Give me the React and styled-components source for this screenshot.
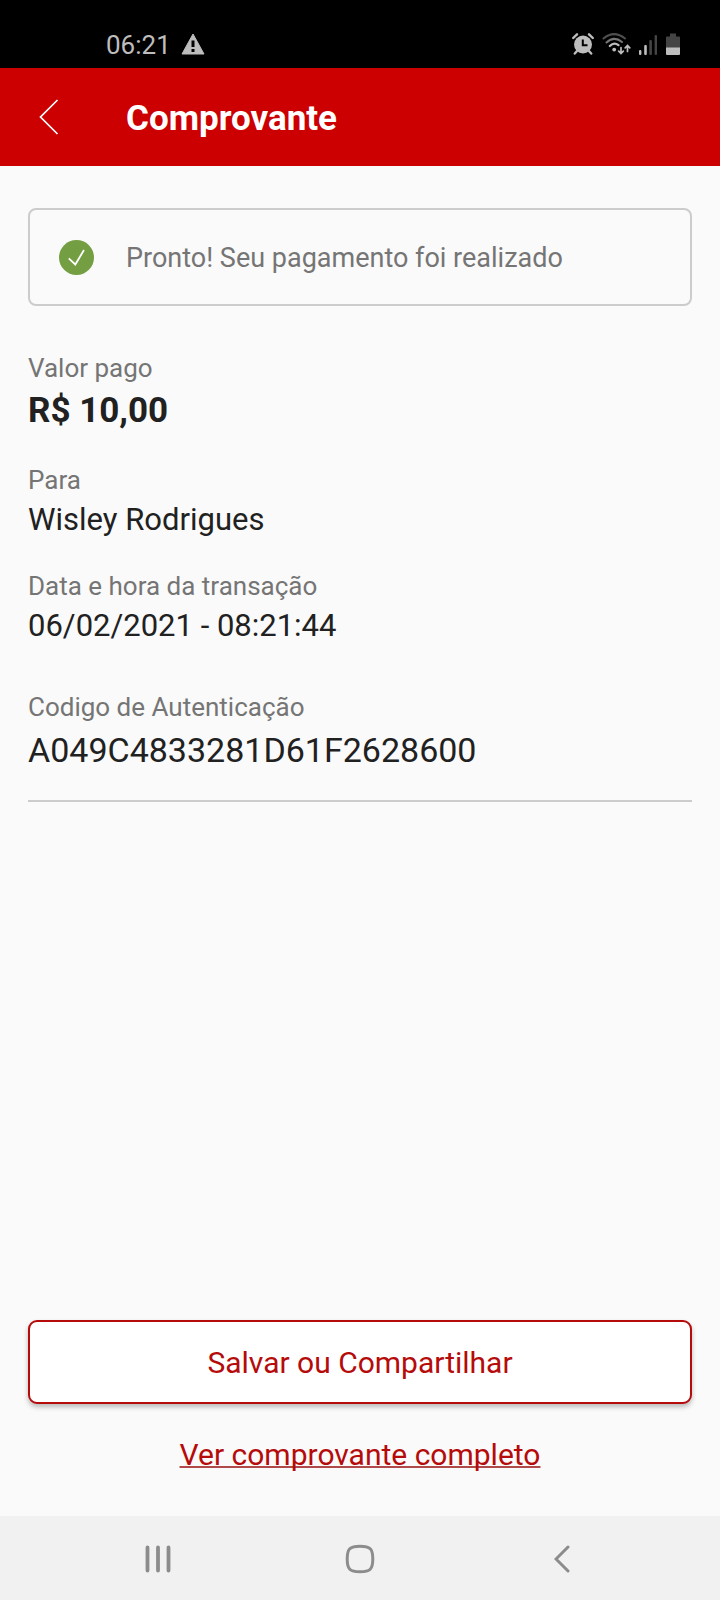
import React from "react";
import styled, { createGlobalStyle } from "styled-components";

const GlobalStyle = createGlobalStyle`
  *, *::before, *::after { box-sizing: border-box; }
  body { margin: 0; background: #fafafa; }
  button { font: inherit; cursor: pointer; }
  svg { display: block; flex: none; }
`;

const Screen = styled.div`
  display: flex;
  flex-direction: column;
  min-height: 100vh;
  background: #fafafa;
  color: #212121;
  font-family: Roboto, "Liberation Sans", sans-serif;
`;

const StatusBar = styled.div`
  display: flex;
  justify-content: space-between;
  height: 68px;
  padding: 22px 40px 0 106px;
  background: #000;
  color: #bdbdbd;
`;

const StatusGroup = styled.div`
  display: flex;
  align-items: center;
  gap: ${({ $gap }) => $gap}px;
  height: 44px;
`;

const Clock = styled.time`
  padding-top: 2px;
  font-size: 26px;
  line-height: 44px;
`;

const Header = styled.header`
  display: flex;
  align-items: center;
  height: 98px;
  padding: 0 29px;
  background: #c00;
  color: #fff;
`;

const IconButton = styled.button`
  display: flex;
  align-items: center;
  justify-content: center;
  width: 40px;
  height: 60px;
  padding: 0;
  border: 0;
  background: none;
  color: inherit;
`;

const Title = styled.h1`
  margin: 0 0 0 57px;
  padding-top: 3px;
  font-size: 35px;
  line-height: 50px;
  font-weight: 700;
`;

const Content = styled.main`
  display: flex;
  flex: 1;
  flex-direction: column;
  padding: 42px 28px 39px;
`;

const Notice = styled.div`
  display: flex;
  align-items: center;
  gap: 32px;
  min-height: 98px;
  padding: 0 29px;
  border: 2px solid #ccc;
  border-radius: 8px;
  color: #757575;
  font-size: 27px;
  line-height: 36px;
`;

const NoticeText = styled.span`
  padding-top: 2px;
`;

const Details = styled.dl`
  display: flex;
  flex-direction: column;
  gap: 26px;
  margin: 44px 0 0;
  padding-bottom: 25px;
  border-bottom: 2px solid #ccc;
`;

const Field = styled.div`
  padding-top: ${({ $spaced }) => ($spaced ? 15 : 0)}px;
`;

const Label = styled.dt`
  color: #757575;
  font-size: 26px;
  line-height: 36px;
`;

const valueSizes = {
  medium: { font: 31, line: 44 },
  code: { font: 34, line: 50 },
  large: { font: 35, line: 50 },
};

const Value = styled.dd`
  margin: 0;
  font-size: ${({ $size }) => valueSizes[$size].font}px;
  line-height: ${({ $size }) => valueSizes[$size].line}px;
  font-weight: ${({ $bold }) => ($bold ? 700 : 400)};
`;

const Actions = styled.div`
  display: flex;
  flex-direction: column;
  align-items: center;
  gap: 29px;
  margin-top: auto;
`;

const PrimaryButton = styled.button`
  width: 100%;
  height: 84px;
  padding: 2px 0 0;
  border: 2px solid #b50b0b;
  border-radius: 9px;
  background: #fff;
  box-shadow: 0 3px 5px rgba(0, 0, 0, 0.26);
  color: #b50b0b;
  font-size: 30px;
  line-height: 44px;
`;

const ReceiptLink = styled.a`
  color: #b50b0b;
  font-size: 30px;
  line-height: 44px;
  text-decoration: underline;
  text-decoration-thickness: 2px;
  text-decoration-skip-ink: none;
  text-decoration-color: #b04a4a;
`;

const NavBar = styled.nav`
  display: grid;
  grid-template-columns: repeat(3, 1fr);
  width: 84%;
  height: 84px;
  margin: 0 auto;
`;

const NavBackground = styled.div`
  background: #f1f1f1;
`;

const NavButton = styled(IconButton)`
  width: 100%;
  height: 84px;
  padding: 2px 0 0;
  color: #8c8c8c;
`;

const WarningIcon = () => (
  <svg width="24" height="22" viewBox="0 0 24 22" aria-hidden="true">
    <path d="M12 1 L23 21 H1 Z" fill="#bdbdbd" stroke="#bdbdbd" strokeLinejoin="round" />
    <path d="M10.5 7.5h3v6.5h-3zM10.5 16h3v3h-3z" fill="#000" />
  </svg>
);

const AlarmIcon = () => (
  <svg width="22" height="22" viewBox="0 0 22 22" fill="none" aria-hidden="true">
    <circle cx="11" cy="11.5" r="9" fill="#bdbdbd" />
    <path d="M1.2 5 L5 1.3 M17 1.3 L20.8 5 M5 18 L2.8 20.5 M17 18 L19.2 20.5" stroke="#bdbdbd" strokeWidth="2.4" strokeLinecap="round" />
    <path d="M10.8 6.5 V12.3 H15.5" stroke="#000" strokeWidth="2" />
  </svg>
);

const WifiIcon = () => (
  <svg width="29" height="22" viewBox="0 0 29 22" fill="none" strokeLinecap="round" aria-hidden="true">
    <path d="M1.5 5.5 Q12 -3.2 23 5.5" stroke="#505050" strokeWidth="2" />
    <path d="M4.5 9.5 Q12 2.5 20 9" stroke="#777" strokeWidth="2" />
    <path d="M7.8 13 Q12 8.5 16.5 12.2" stroke="#bdbdbd" strokeWidth="2.2" />
    <circle cx="12.2" cy="16.6" r="1.9" fill="#bdbdbd" />
    <path d="M19 14.5 V20.5 M16.7 18.2 L19 20.5 L21.3 18.2 M25.5 18.5 V12.5 M23.2 14.8 L25.5 12.5 L27.8 14.8" stroke="#bdbdbd" strokeWidth="1.7" />
  </svg>
);

const SignalIcon = () => (
  <svg width="19" height="22" viewBox="0 0 19 22" aria-hidden="true">
    <rect x="0" y="17" width="2.4" height="5" rx="1" fill="#bdbdbd" />
    <rect x="5.2" y="12" width="2.6" height="10" rx="1" fill="#bdbdbd" />
    <rect x="10.3" y="7" width="2.6" height="15" rx="1" fill="#444" />
    <rect x="15.6" y="2" width="2.4" height="20" rx="1" fill="#444" />
  </svg>
);

const BatteryIcon = () => (
  <svg width="14" height="22" viewBox="0 0 14 22" aria-hidden="true">
    <path d="M4 0.5h6v3h3a1 1 0 0 1 1 1V15H0V4.5a1 1 0 0 1 1-1h3z" fill="#444" />
    <path d="M0 14.5h14V21a1 1 0 0 1-1 1H1a1 1 0 0 1-1-1z" fill="#bdbdbd" />
  </svg>
);

const BackIcon = () => (
  <svg width="20" height="38" viewBox="0 0 20 38" fill="none" aria-hidden="true">
    <path d="M18.5 2 L1.5 19 L18.5 36" stroke="currentColor" strokeWidth="1.7" />
  </svg>
);

const CheckIcon = () => (
  <svg width="35" height="35" viewBox="0 0 35 35" fill="none" aria-hidden="true">
    <circle cx="17.5" cy="17.5" r="17.5" fill="#739e41" />
    <path d="M9.8 18.3 L16.3 24.5 L25 10" stroke="#fff" strokeWidth="1.8" />
  </svg>
);

const RecentsIcon = () => (
  <svg width="26" height="28" viewBox="0 0 26 28" aria-hidden="true">
    <path d="M2.5 2.5 V25.5 M13 2.5 V25.5 M23.5 2.5 V25.5" stroke="currentColor" strokeWidth="3.8" strokeLinecap="round" />
  </svg>
);

const HomeIcon = () => (
  <svg width="30" height="30" viewBox="0 0 30 30" fill="none" aria-hidden="true">
    <path d="M15 2.2 C25.2 2.2 27.8 4.8 27.8 15 C27.8 25.2 25.2 27.8 15 27.8 C4.8 27.8 2.2 25.2 2.2 15 C2.2 4.8 4.8 2.2 15 2.2Z" stroke="currentColor" strokeWidth="3" />
  </svg>
);

const NavBackIcon = () => (
  <svg width="16" height="28" viewBox="0 0 16 28" fill="none" aria-hidden="true">
    <path d="M14 2 L2 14 L14 26" stroke="currentColor" strokeWidth="3" strokeLinecap="round" />
  </svg>
);

export default function App() {
  return (
    <Screen>
      <GlobalStyle />
      <StatusBar>
        <StatusGroup $gap={10}>
          <Clock>06:21</Clock>
          <WarningIcon />
        </StatusGroup>
        <StatusGroup $gap={8}>
          <AlarmIcon />
          <WifiIcon />
          <SignalIcon />
          <BatteryIcon />
        </StatusGroup>
      </StatusBar>
      <Header>
        <IconButton type="button" aria-label="Voltar">
          <BackIcon />
        </IconButton>
        <Title>Comprovante</Title>
      </Header>
      <Content>
        <Notice role="status">
          <CheckIcon />
          <NoticeText>Pronto! Seu pagamento foi realizado</NoticeText>
        </Notice>
        <Details>
          <Field>
            <Label>Valor pago</Label>
            <Value $size="large" $bold>R$ 10,00</Value>
          </Field>
          <Field>
            <Label>Para</Label>
            <Value $size="medium">Wisley Rodrigues</Value>
          </Field>
          <Field>
            <Label>Data e hora da transação</Label>
            <Value $size="medium">06/02/2021 - 08:21:44</Value>
          </Field>
          <Field $spaced>
            <Label>Codigo de Autenticação</Label>
            <Value $size="code">A049C4833281D61F2628600</Value>
          </Field>
        </Details>
        <Actions>
          <PrimaryButton type="button">Salvar ou Compartilhar</PrimaryButton>
          <ReceiptLink href="#comprovante">Ver comprovante completo</ReceiptLink>
        </Actions>
      </Content>
      <NavBackground>
        <NavBar aria-label="Sistema">
          <NavButton type="button" aria-label="Recentes">
            <RecentsIcon />
          </NavButton>
          <NavButton type="button" aria-label="Início">
            <HomeIcon />
          </NavButton>
          <NavButton type="button" aria-label="Voltar">
            <NavBackIcon />
          </NavButton>
        </NavBar>
      </NavBackground>
    </Screen>
  );
}
